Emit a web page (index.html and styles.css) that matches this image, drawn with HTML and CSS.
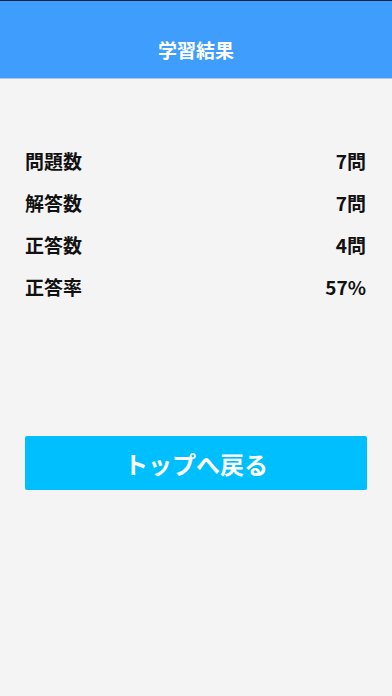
FILE: index.html
```html
<!DOCTYPE html>
<html lang="ja">
<head>
<meta charset="utf-8">
<link rel="stylesheet" href="styles.css">
</head>
<body>
<header class="navbar"><h1 class="title">学習結果</h1></header>
<main class="content">
  <ul class="stats">
    <li class="row"><span class="label">問題数</span><span class="value">7問</span></li>
    <li class="row"><span class="label">解答数</span><span class="value">7問</span></li>
    <li class="row"><span class="label">正答数</span><span class="value">4問</span></li>
    <li class="row"><span class="label">正答率</span><span class="value">57%</span></li>
  </ul>
  <button class="back-btn">トップへ戻る</button>
</main>
</body>
</html>
```
FILE: styles.css
```css
html, body {
  margin: 0;
  padding: 0;
  height: 100%;
}
body {
  background: #f4f4f4;
  font-family: "Noto Sans CJK JP", "Noto Sans", sans-serif;
  color: #111;
}
.navbar {
  box-sizing: border-box;
  height: 79px;
  background: #3e9dfd;
  border-top: 1px solid #0e2246;
  border-bottom: 1px solid #b4c6da;
  display: flex;
  align-items: flex-end;
  justify-content: center;
}
.title {
  margin: 0 0 13px;
  font-size: 19px;
  font-weight: 700;
  line-height: 30px;
  color: #fff;
}
.content {
  padding: 60px 25px 0 25px;
}
.stats {
  list-style: none;
  margin: 0;
  padding: 0;
}
.row {
  display: flex;
  justify-content: space-between;
  align-items: center;
  height: 42px;
  font-size: 19px;
  font-weight: 700;
}
.value {
  padding-right: 1px;
}
.back-btn {
  display: block;
  box-sizing: border-box;
  width: 100%;
  height: 54px;
  margin-top: 129px;
  border: none;
  border-radius: 2px;
  background: #00bfff;
  color: #fff;
  font-family: "Noto Sans CJK JP", "Noto Sans", sans-serif;
  font-size: 24px;
  font-weight: 700;
  padding: 0;
}
```
